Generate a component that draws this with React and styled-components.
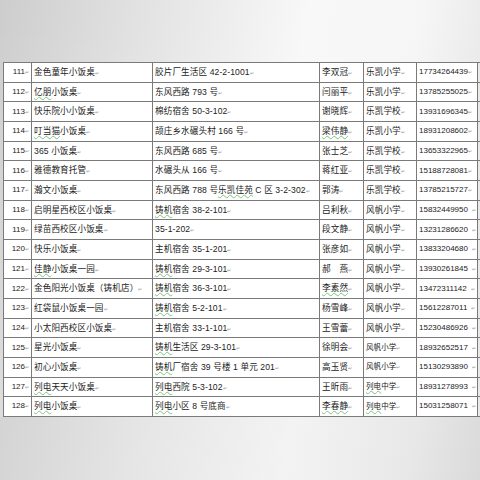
import React from 'react';
import styled, { createGlobalStyle } from 'styled-components';

const Global = createGlobalStyle`
  html, body {
    margin: 0;
    padding: 0;
    background: #e4e4e4;
  }
`;

const Page = styled.div`
  width: 480px;
  height: 480px;
  overflow: hidden;
  display: flex;
  flex-direction: column;
  background:
    linear-gradient(180deg, rgba(255,255,255,0) 0%, rgba(255,255,255,0.15) 100%),
    linear-gradient(100deg, #cdcdcd 0%, #e2e2e2 25%, #f8f8f8 55%, #f6f6f6 75%, #dedede 100%);
  font-family: "Liberation Sans", "Noto Sans CJK SC", sans-serif;
`;

const Top = styled.div`
  height: 62px;
  flex: none;
`;

const Bottom = styled.div`
  flex: 1;
  background: linear-gradient(100deg, #d4d4d4 0%, #e6e6e6 30%, #f3f3f3 60%, #e8e8e8 85%, #dadada 100%);
`;

const Sheet = styled.table`
  margin-left: 3px;
  border-collapse: collapse;
  table-layout: fixed;
  width: 504px;
  background: #fff;
  border-left: 1.5px solid #555;
`;

const Row = styled.tr`
  height: 19.66px;
`;

const Cell = styled.td`
  border: 1px solid #7a7a7a;
  padding: 0 2px;
  font-size: ${p => (p.small ? '7.5px' : p.digits ? '8px' : '8.6px')};
  letter-spacing: ${p => (p.digits ? '0' : '0.1px')};
  color: #222;
  white-space: nowrap;
  overflow: hidden;
  text-align: ${p => (p.right ? 'right' : 'left')};
  vertical-align: middle;
  line-height: 1;
  background: ${p => (p.edge ? '#e9e9e9' : '#fff')};
  border-right: ${p => (p.edge ? 'none' : '1px solid #7a7a7a')};
`;

const Ret = styled.span`
  font-size: 5px;
  letter-spacing: 0;
  color: #9a9a9a;
  margin-left: ${p => (p.gap ? '4px' : '0')};
`;

const Wavy = styled.span`
  text-decoration: underline wavy #7cc47c;
  text-decoration-thickness: 0.5px;
  text-underline-offset: 1px;
`;

const rows = [
  ['111', '金色童年小饭桌', '胶片厂生活区 42-2-1001', '李双冠', '乐凯小学', '17734264439'],
  ['112', '~亿朋~小饭桌', '东风西路 793 号', '闫丽平', '乐凯小学', '13785255025'],
  ['113', '快乐院小小饭桌', '棉纺宿舍 50-3-102', '谢晓辉', '乐凯学校', '13931696345'],
  ['114', '~叮当猫~小饭桌', '颉庄乡水碾头村 166 号', '~梁伟静~', '乐凯小学', '18931208602'],
  ['115', '365 小饭桌', '东风西路 685 号', '张士芝', '乐凯学校', '13653322965'],
  ['116', '雅德教育托管', '水碾头从 166 号', '蒋红亚', '乐凯学校', '15188728081'],
  ['117', '瀚文小饭桌', '东风西路 788 号~乐凯佳苑~ C 区 3-2-302', '郭涛', '乐凯学校', '13785215727'],
  ['118', '启明星西校区小饭桌', '~铸机~宿舍 38-2-101', '吕利秋', '风帆小学', '15832449950', true],
  ['119', '绿苗西校区小饭桌', '35-1-202', '段文静', '风帆小学', '13231286620', true],
  ['120', '快乐小饭桌', '主机宿舍 35-1-201', '张彦如', '风帆小学', '13833204680', true],
  ['121', '~佳静~小饭桌一园', '~铸机~宿舍 29-3-101', '郝　燕', '风帆小学', '13930261845', true],
  ['122', '金色阳光小饭桌（铸机店）', '~铸机~宿舍 36-3-101', '~李素然~', '风帆小学', '13472311142', true],
  ['123', '红袋鼠小饭桌一园', '~铸机~宿舍 5-2-101', '杨雪峰', '风帆小学', '15612287011', true],
  ['124', '小太阳西校区小饭桌', '主机宿舍 33-1-101', '王雪蕾', '风帆小学', '15230486926', true],
  ['125', '星光小饭桌', '~铸机~生活区 29-3-101', '徐明会', '风帆小学', '18932652517', true, true],
  ['126', '初心小饭桌', '~铸机~厂宿舍 39 号楼 1 单元 201', '高玉贤', '风帆小学', '15130293890', true, true],
  ['127', '~列电~天天小饭桌', '~列电~西院 5-3-102', '王昕雨', '~列电~中学', '18931278993', true, true],
  ['128', '~列电~小饭桌', '~列电~小区 8 号底商', '~李春静~', '~列电~中学', '15031258071', true, true],
];

function Text({ value, gap }) {
  const parts = value.split('~');
  return (
    <>
      {parts.map((p, i) => (i % 2 ? <Wavy key={i}>{p}</Wavy> : <React.Fragment key={i}>{p}</React.Fragment>))}
      <Ret gap={gap}>↵</Ret>
    </>
  );
}

export default function App() {
  return (
    <Page>
      <Global />
      <Top />
      <Sheet>
        <colgroup>
          <col style={{ width: 28 }} />
          <col style={{ width: 121 }} />
          <col style={{ width: 167 }} />
          <col style={{ width: 44 }} />
          <col style={{ width: 53 }} />
          <col style={{ width: 61 }} />
          <col style={{ width: 30 }} />
        </colgroup>
        <tbody>
          {rows.map(([no, name, addr, person, school, phone, spaced, small]) => (
            <Row key={no}>
              <Cell right digits><Text value={no} /></Cell>
              <Cell><Text value={name} /></Cell>
              <Cell><Text value={addr} /></Cell>
              <Cell><Text value={person} /></Cell>
              <Cell small={small}><Text value={school} /></Cell>
              <Cell digits><Text value={phone} gap={spaced} /></Cell>
              <Cell edge />
            </Row>
          ))}
        </tbody>
      </Sheet>
      <Bottom />
    </Page>
  );
}
